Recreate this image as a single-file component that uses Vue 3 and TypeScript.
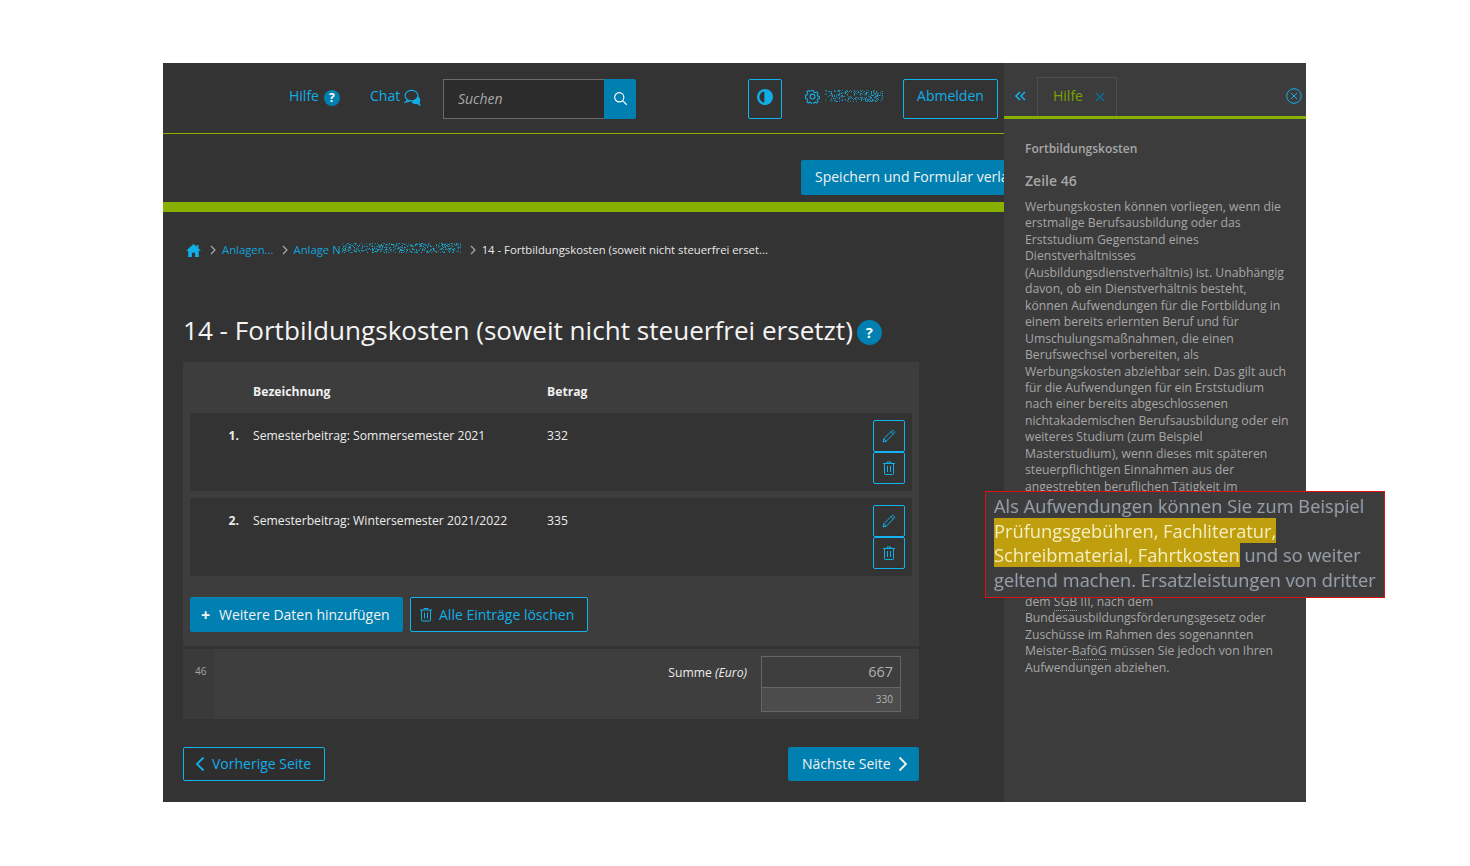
<template>
  <div class="frame">
    <main class="main">
      <header class="topbar">
        <a class="top-link hilfe">Hilfe
          <span class="q-circle small">?</span>
        </a>
        <a class="top-link chat">Chat
          <svg class="chat-icon" viewBox="0 0 18 18" fill="none" stroke="currentColor" stroke-width="1.3">
            <ellipse cx="8" cy="7" rx="6.8" ry="5.6" />
            <path d="M4 11.500 1.500 14l5-1.300" />
            <path d="M14.500 8.500c2 1.500 2.500 3.600 1.300 5.300l.9 3-3.400-1.700c-1.800.4-3.600 0-5-1.200" fill="currentColor" />
          </svg>
        </a>
        <div class="search">
          <span class="search-input">Suchen</span>
          <button class="search-btn">
            <svg viewBox="0 0 18 18" fill="none" stroke="#fff" stroke-width="1.4">
              <circle cx="7.500" cy="7.500" r="5.500" />
              <path d="M11.500 11.500 16.500 16.500" />
            </svg>
          </button>
        </div>
        <button class="outline-btn contrast">
          <svg viewBox="0 0 16 16">
            <circle cx="8" cy="8" r="6.800" fill="none" stroke="currentColor" stroke-width="2.400" />
            <path d="M7.400 1.200a6.800 6.800 0 0 1 0 13.600z" fill="currentColor" />
          </svg>
        </button>
        <svg class="gear" viewBox="0 0 16 16" fill="none" stroke="currentColor" stroke-width="1.200">
          <circle cx="8" cy="8" r="2.600" />
          <path d="M6.800 1h2.400l.4 2 1.500.7 1.800-1.100 1.600 1.700-1.100 1.700.6 1.500 2 .5v2.400l-2 .4-.6 1.500 1.100 1.800-1.700 1.600-1.700-1.100-1.500.6-.4 2H6.800l-.4-2-1.500-.6-1.700 1.100-1.700-1.600 1.100-1.800-.6-1.500-2-.4V6.500l2-.5.6-1.500-1.100-1.700 1.700-1.700 1.700 1.100 1.500-.7z" transform="translate(.6 .6) scale(.92)" />
        </svg>
        <svg class="noise user-noise" width="58" height="14">
          <rect v-for="(d, i) in userNoise" :key="i" :x="d.x" :y="d.y" width="1" height="1" :opacity="d.o" :fill="d.c" />
        </svg>
        <button class="outline-btn logout">Abmelden</button>
      </header>

      <div class="save-row">
        <button class="solid-btn save">Speichern und Formular verlassen</button>
      </div>
      <div class="green-bar"></div>

      <nav class="crumbs">
        <svg class="home" viewBox="0 0 16 14" fill="#12aee8">
          <path d="M8 0 0 7.200h2.300V14h4V9.500h3.400V14h4V7.200H16l-2.700-2.500V1h-2v1.900z" />
        </svg>
        <svg class="sep" viewBox="0 0 6 10" fill="none" stroke="#aaa" stroke-width="1.200"><path d="m1 1 4 4-4 4" /></svg>
        <a>Anlagen...</a>
        <svg class="sep" viewBox="0 0 6 10" fill="none" stroke="#aaa" stroke-width="1.200"><path d="m1 1 4 4-4 4" /></svg>
        <a>Anlage N</a>
        <svg class="noise crumb-noise" width="120" height="12">
          <rect v-for="(d, i) in crumbNoise" :key="i" :x="d.x" :y="d.y" width="1" height="1" :opacity="d.o" :fill="d.c" />
        </svg>
        <svg class="sep" viewBox="0 0 6 10" fill="none" stroke="#aaa" stroke-width="1.200"><path d="m1 1 4 4-4 4" /></svg>
        <span class="crumb-current">14 - Fortbildungskosten (soweit nicht steuerfrei erset...</span>
      </nav>

      <h1 class="title">14 - Fortbildungskosten (soweit nicht steuerfrei ersetzt)<span class="q-circle">?</span></h1>

      <section class="panel">
        <div class="table-head">
          <span class="col-name">Bezeichnung</span>
          <span class="col-amount">Betrag</span>
        </div>
        <div v-for="(row, i) in rows" :key="i" class="table-row">
          <span class="row-num">{{ i + 1 }}.</span>
          <span class="col-name cell">{{ row.name }}</span>
          <span class="col-amount cell">{{ row.amount }}</span>
          <div class="row-actions">
            <button class="icon-btn">
              <svg viewBox="0 0 14 14" fill="none" stroke="currentColor" stroke-width="1">
                <path d="M1 13 1.800 9.800 10 1.600a1 1 0 0 1 1.400 0l1 1a1 1 0 0 1 0 1.400L4.200 12.200z" />
                <path d="m9 2.600 2.400 2.400M1.800 9.800l2.400 2.400" />
              </svg>
            </button>
            <button class="icon-btn">
              <svg viewBox="0 0 14 14" fill="none" stroke="currentColor" stroke-width="1">
                <path d="M1 2.500h12M5 2.500V1h4v1.500M2.500 2.500v10.200a.8.800 0 0 0 .8.800h7.400a.8.800 0 0 0 .8-.8V2.500M5.500 5v6M8.500 5v6" />
              </svg>
            </button>
          </div>
        </div>
        <div class="panel-actions">
          <button class="solid-btn add"><span class="plus">+</span>Weitere Daten hinzufügen</button>
          <button class="outline-btn clear">
            <svg viewBox="0 0 14 14" fill="none" stroke="currentColor" stroke-width="1">
              <path d="M1 2.500h12M5 2.500V1h4v1.500M2.500 2.500v10.200a.8.800 0 0 0 .8.800h7.400a.8.800 0 0 0 .8-.8V2.500M5.500 5v6M8.500 5v6" />
            </svg>
            Alle Einträge löschen
          </button>
        </div>
      </section>

      <section class="sum-row">
        <div class="line-no">46</div>
        <div class="sum-body">
          <span class="sum-label">Summe <em>(Euro)</em></span>
          <div class="sum-box">
            <div class="sum-value">667</div>
            <div class="sum-prev">330</div>
          </div>
        </div>
      </section>

      <footer class="pager">
        <button class="outline-btn prev">
          <svg viewBox="0 0 10 16" fill="none" stroke="currentColor" stroke-width="1.800"><path d="M8.500 1.500 2 8l6.500 6.500" /></svg>
          Vorherige Seite
        </button>
        <button class="solid-btn next">
          Nächste Seite
          <svg viewBox="0 0 10 16" fill="none" stroke="currentColor" stroke-width="1.800"><path d="m1.500 1.500 6.500 6.500-6.500 6.500" /></svg>
        </button>
      </footer>
    </main>

    <aside class="help">
      <div class="help-tabs">
        <svg class="collapse" viewBox="0 0 11 10" fill="none" stroke="currentColor" stroke-width="1.600">
          <path d="M5 1 1 5l4 4M10 1 6 5l4 4" />
        </svg>
        <div class="tab">
          <span>Hilfe</span>
          <svg viewBox="0 0 10 10" fill="none" stroke="#0a6f96" stroke-width="1.400"><path d="m1 1 8 8M9 1 1 9" /></svg>
        </div>
        <svg class="help-close" viewBox="0 0 16 16" fill="none" stroke="currentColor" stroke-width="1">
          <circle cx="8" cy="8" r="7.300" />
          <path d="m5 5 6 6M11 5l-6 6" />
        </svg>
      </div>
      <div class="help-body">
        <h3>Fortbildungskosten</h3>
        <h4>Zeile 46</h4>
        <p>
          <span v-for="(line, i) in helpLines" :key="i" class="help-line">{{ line }}</span>
          <!-- the lines between these two blocks lie under the magnifier -->
          <span class="help-line after-magnifier">dem <span class="abbr">SGB</span> III, nach dem</span>
          <span class="help-line">Bundesausbildungsförderungsgesetz oder</span>
          <span class="help-line">Zuschüsse im Rahmen des sogenannten</span>
          <span class="help-line">Meister-<span class="abbr">BaföG</span> müssen Sie jedoch von Ihren</span>
          <span class="help-line">Aufwendungen abziehen.</span>
        </p>
      </div>
    </aside>

    <div class="magnifier">
      <div class="magnifier-text">
        Als Aufwendungen können Sie zum Beispiel<br />
        <mark>Prüfungsgebühren, Fachliteratur,<br />Schreibmaterial, Fahrtkosten</mark> und so weiter<br />
        geltend machen. Ersatzleistungen von dritter
      </div>
    </div>
  </div>
</template>

<script setup lang="ts">
interface Row {
  name: string
  amount: number
}

const rows: Row[] = [
  { name: 'Semesterbeitrag: Sommersemester 2021', amount: 332 },
  { name: 'Semesterbeitrag: Wintersemester 2021/2022', amount: 335 },
]

const helpLines = [
  'Werbungskosten können vorliegen, wenn die',
  'erstmalige Berufsausbildung oder das',
  'Erststudium Gegenstand eines',
  'Dienstverhältnisses',
  '(Ausbildungsdienstverhältnis) ist. Unabhängig',
  'davon, ob ein Dienstverhältnis besteht,',
  'können Aufwendungen für die Fortbildung in',
  'einem bereits erlernten Beruf und für',
  'Umschulungsmaßnahmen, die einen',
  'Berufswechsel vorbereiten, als',
  'Werbungskosten abziehbar sein. Das gilt auch',
  'für die Aufwendungen für ein Erststudium',
  'nach einer bereits abgeschlossenen',
  'nichtakademischen Berufsausbildung oder ein',
  'weiteres Studium (zum Beispiel',
  'Masterstudium), wenn dieses mit späteren',
  'steuerpflichtigen Einnahmen aus der',
  'angestrebten beruflichen Tätigkeit im',
]

const noiseColors = ['#12aee8', '#12aee8', '#1c8fd0', '#25b7a0']

// pixelated area standing in for the masked name
const makeNoise = (width: number, height: number, seed: number) => {
  const dots: { x: number; y: number; o: number; c: string }[] = []
  let s = seed
  const next = () => {
    s = (s * 16807) % 2147483647
    return s / 2147483647
  }
  for (let x = 0; x < width; x++) {
    for (let y = 0; y < height; y++) {
      if (next() < 0.36) {
        dots.push({
          x,
          y,
          o: 0.35 + next() * 0.65,
          c: noiseColors[Math.floor(next() * noiseColors.length)],
        })
      }
    }
  }
  return dots
}

const userNoise = makeNoise(58, 12, 1234)
const crumbNoise = makeNoise(120, 10, 98765)
</script>

<style scoped>
.frame {
  position: relative;
  display: flex;
  width: 1143px;
  height: 739px;
  margin: 63px 0 0 163px;
  font-family: "Open Sans", "Noto Sans", sans-serif;
  background: #333;
  color: #fff;
}

button {
  font-family: inherit;
  cursor: pointer;
}

.main {
  width: 841px;
  overflow: hidden;
  flex-shrink: 0;
}

.topbar {
  display: flex;
  align-items: center;
  height: 69px;
  padding: 1px 6px 0 126px;
  border-bottom: 1px solid #8ab000;
}

.top-link {
  display: flex;
  align-items: center;
  font-size: 14px;
  color: #12aee8;
  margin-top: -6px;
}

.hilfe {
  width: 81px;
  gap: 5px;
}

.chat {
  width: 73px;
  gap: 4px;
}

.q-circle {
  display: inline-flex;
  align-items: center;
  justify-content: center;
  width: 25px;
  height: 25px;
  margin-left: 4px;
  border-radius: 50%;
  background: #0080b0;
  color: #fff;
  font-size: 15px;
  font-weight: 700;
  vertical-align: 2px;
}

.q-circle.small {
  width: 16px;
  height: 16px;
  margin: 4px 0 0;
  font-size: 12px;
}

.chat-icon {
  width: 17px;
  height: 17px;
  margin-top: 3px;
}

.search {
  display: flex;
  width: 193px;
  height: 40px;
  flex-shrink: 0;
}

.search-input {
  flex: 1;
  padding-left: 14px;
  line-height: 38px;
  border: 1px solid #6b6b6b;
  border-right: 0;
  background: #2c2c2c;
  color: #a8a8a8;
  font-size: 14px;
  font-style: italic;
}

.search-btn {
  width: 32px;
  padding: 0;
  border: 0;
  border-radius: 0 2px 2px 0;
  background: #0080b0;
  display: flex;
  align-items: center;
  justify-content: center;
}

.search-btn svg {
  width: 15px;
  height: 15px;
}

.outline-btn {
  border: 1px solid #12b4f0;
  border-radius: 2px;
  background: #2e2e2e;
  color: #12aee8;
  font-size: 14px;
}

.contrast {
  display: flex;
  align-items: center;
  justify-content: center;
  width: 34px;
  height: 40px;
  margin-left: 112px;
  padding: 0 0 3px;
  background: transparent;
}

.contrast svg {
  width: 16px;
  height: 16px;
}

.gear {
  width: 15px;
  height: 15px;
  margin: -4px 0 0 23px;
  color: #12aee8;
}

.user-noise {
  margin: -4px 0 0 5px;
}

.noise {
  flex-shrink: 0;
}

.logout {
  width: 95px;
  height: 40px;
  margin-left: 20px;
  padding: 0 0 7px;
  background: transparent;
}

.save-row {
  height: 68px;
  padding: 26px 0 0 638px;
  box-sizing: border-box;
}

.solid-btn {
  border: 0;
  border-radius: 2px;
  background: #0080b0;
  color: #f2f2f2;
  font-size: 14px;
}

.save {
  height: 35px;
  padding: 0 14px 2px;
  white-space: nowrap;
}

.green-bar {
  height: 10px;
  background: #88b000;
}

.crumbs {
  display: flex;
  align-items: center;
  height: 16px;
  margin: 29px 0 0 23px;
  font-size: 11.300px;
  color: #12a4dc;
}

.home {
  width: 15px;
  height: 13px;
  margin: 2px 1px 0 0;
}

.sep {
  width: 6px;
  height: 10px;
  margin: 1px 6px 0 8px;
}

.crumb-noise {
  margin-left: 1px;
}

.crumb-current {
  color: #e8e8e8;
}

.title {
  margin: 54px 0 0 20px;
  height: 51px;
  font-size: 26.100px;
  font-weight: 400;
  line-height: 38px;
  color: #f4f4f4;
  white-space: nowrap;
}

.panel {
  width: 736px;
  height: 284px;
  margin-left: 20px;
  padding: 0 7px;
  box-sizing: border-box;
  background: #3d3d3d;
}

.table-head {
  display: flex;
  height: 51px;
  padding-top: 7px;
  box-sizing: border-box;
  align-items: center;
  font-size: 12.200px;
  font-weight: 700;
  color: #f0f0f0;
}

.table-head .col-name {
  margin-left: 63px;
}

.col-name {
  width: 294px;
}

.table-row {
  position: relative;
  display: flex;
  height: 78px;
  margin-bottom: 7px;
  padding-top: 14px;
  box-sizing: border-box;
  background: #333;
  font-size: 12.200px;
  color: #ececec;
}

.row-num {
  width: 63px;
  padding-right: 14px;
  box-sizing: border-box;
  text-align: right;
  font-weight: 700;
}

.cell {
  line-height: 17px;
}

.row-actions {
  margin-left: auto;
  margin-right: 7px;
  margin-top: -7px;
  display: flex;
  flex-direction: column;
}

.icon-btn {
  display: flex;
  align-items: center;
  justify-content: center;
  width: 32px;
  height: 32px;
  padding: 0;
  border: 1px solid #12b4f0;
  border-radius: 2px;
  background: transparent;
  color: #12aee8;
}

.icon-btn svg {
  width: 14px;
  height: 14px;
}

.panel-actions {
  display: flex;
  gap: 7px;
  margin-top: 21px;
}

.add {
  display: flex;
  align-items: center;
  width: 213px;
  height: 35px;
  padding: 0 0 0 11px;
  box-sizing: border-box;
}

.plus {
  width: 18px;
  font-size: 16px;
  font-weight: 700;
  text-align: left;
}

.clear {
  display: flex;
  align-items: center;
  gap: 6px;
  width: 178px;
  height: 35px;
  padding: 0 0 0 8px;
  box-sizing: border-box;
}

.clear svg {
  width: 14px;
  height: 15px;
}

.sum-row {
  display: flex;
  width: 736px;
  height: 70px;
  margin: 3px 0 0 20px;
  background: #3e3e3e;
}

.line-no {
  width: 31px;
  padding: 15px 0 0 12px;
  box-sizing: border-box;
  background: #3a3a3a;
  font-size: 10px;
  color: #a4a4a4;
}

.sum-body {
  flex: 1;
  display: flex;
  justify-content: flex-end;
  padding: 7px 18px 0 0;
}

.sum-label {
  margin: 8px 14px 0 0;
  font-size: 12.200px;
  color: #ececec;
}

.sum-box {
  width: 140px;
  height: 56px;
  box-sizing: border-box;
  border: 1px solid #666;
  text-align: right;
}

.sum-value {
  height: 31px;
  box-sizing: border-box;
  padding-right: 7px;
  line-height: 30px;
  font-size: 14.500px;
  color: #b0b0b0;
  border-bottom: 1px solid #666;
}

.sum-prev {
  height: 23px;
  padding-right: 7px;
  line-height: 23px;
  font-size: 10px;
  color: #b4b4b4;
  background: #4c4c4c;
}

.pager {
  display: flex;
  justify-content: space-between;
  width: 736px;
  margin: 28px 0 0 20px;
}

.prev,
.next {
  display: flex;
  align-items: center;
  height: 34px;
  box-sizing: border-box;
  font-size: 14px;
}

.prev {
  width: 142px;
  padding: 0 0 2px 11px;
  gap: 7px;
}

.next {
  width: 131px;
  padding: 0 0 2px 14px;
  gap: 7px;
}

.prev svg,
.next svg {
  width: 10px;
  height: 16px;
  margin-top: 2px;
}

.help {
  position: relative;
  width: 302px;
  min-width: 0;
  flex-shrink: 0;
  background: #3c3c3c;
  color: #a6a6a6;
}

.help-tabs {
  display: flex;
  align-items: flex-end;
  height: 53px;
  border-bottom: 3px solid #88b000;
  color: #12aee8;
}

.collapse {
  width: 11px;
  height: 10px;
  margin: 0 11px 15px 11px;
}

.tab {
  display: flex;
  align-items: center;
  gap: 12px;
  width: 80px;
  height: 39px;
  padding: 0 0 4px 15px;
  box-sizing: border-box;
  border: 1px solid #4e4e4e;
  border-bottom: 0;
  font-size: 14px;
  color: #7ba200;
}

.tab svg {
  width: 10px;
  height: 10px;
  margin-top: 3px;
}

.help-close {
  width: 16px;
  height: 16px;
  margin: 0 4px 12px auto;
}

.help-body {
  padding: 22px 16px 0 21px;
}

.help-body h3 {
  margin: 0;
  font-size: 12px;
  line-height: 16px;
  font-weight: 600;
}

.help-body h4 {
  margin: 14px 0 0;
  font-size: 14px;
  line-height: 20px;
  font-weight: 600;
}

.help-body p {
  margin: 8px 0 0;
  font-size: 12.200px;
  line-height: 16.460px;
}

.help-line {
  display: block;
  white-space: nowrap;
}

.after-magnifier {
  margin-top: 98.760px;
}

.abbr {
  border-bottom: 1px dotted #a6a6a6;
}

.magnifier {
  position: absolute;
  left: 822px;
  top: 428px;
  width: 400px;
  height: 107px;
  padding: 2px 0 0 8px;
  box-sizing: border-box;
  border: 1px solid #e01010;
  background: #3c3c3c;
  color: #9c9c9c;
  font-size: 18.300px;
  line-height: 24.500px;
  white-space: nowrap;
}

/* the reference shows this text as an enlarged, slightly soft bitmap */
.magnifier-text {
  filter: blur(0.4px);
  text-shadow: -1px 0 0 rgba(60, 110, 170, 0.4);
}

.magnifier mark {
  background: #bf9f0d;
  color: #f5eec0;
  text-shadow: none;
}
</style>

<style>
html,
body {
  background: #fff;
}
</style>
